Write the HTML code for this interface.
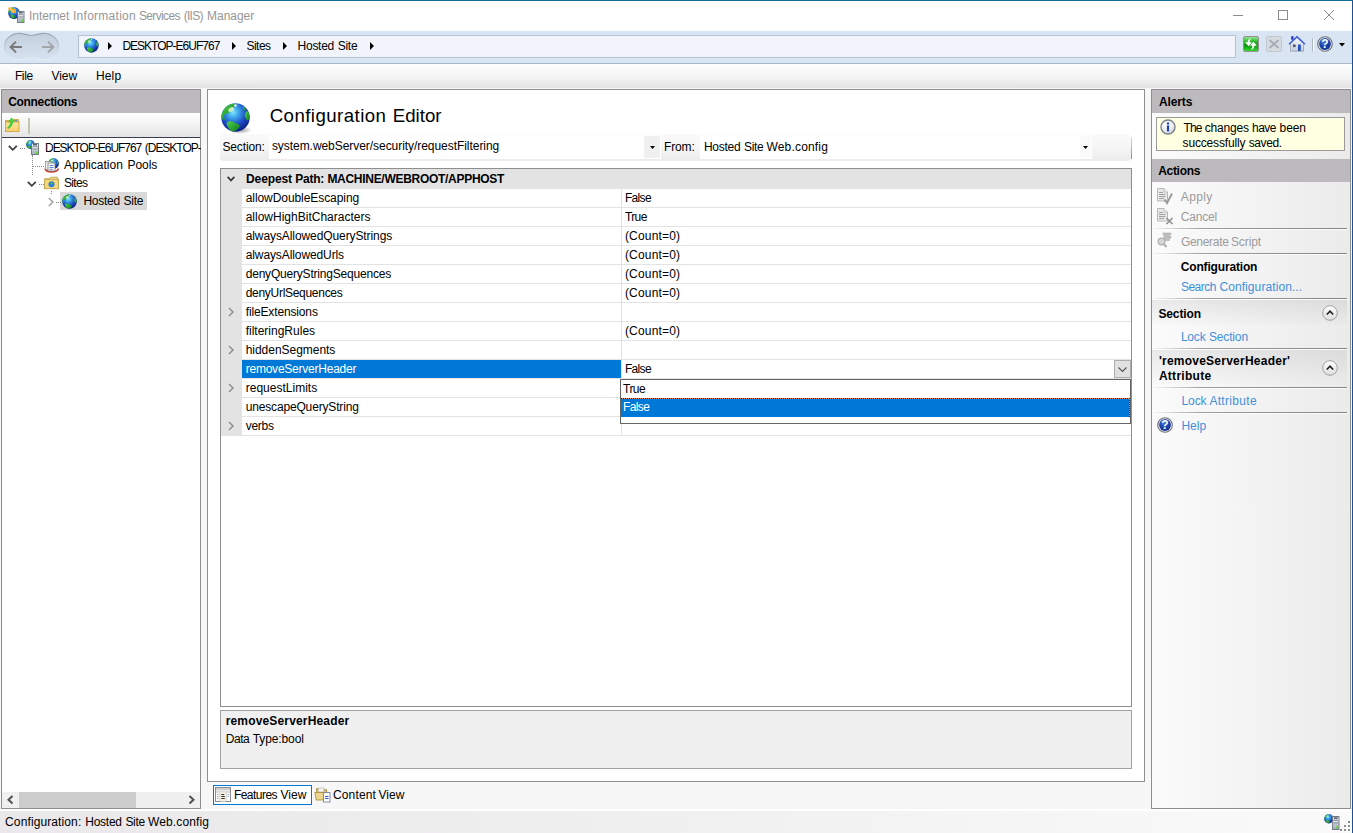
<!DOCTYPE html>
<html><head><meta charset="utf-8"><title>Internet Information Services (IIS) Manager</title>
<style>
*{box-sizing:border-box;margin:0;padding:0}
html,body{width:1353px;height:833px;overflow:hidden;background:#f0f0f0}
body{font-family:"Liberation Sans",sans-serif;font-size:12px;color:#000;position:relative}
.a{position:absolute;white-space:nowrap}
.t{position:absolute;white-space:nowrap;line-height:16px;height:16px}
.b{font-weight:bold}
.g{color:#9b9b9b}
.l{color:#4390da}
svg{position:absolute;overflow:visible}
.sep{position:absolute;left:1153px;width:194px;height:2px;background:linear-gradient(90deg,rgba(130,130,130,0.05),rgba(130,130,130,0.75) 25%,#848484) top/100% 1px no-repeat,linear-gradient(#fcfcfc,#fcfcfc) bottom/100% 1px no-repeat}
.hl{position:absolute;left:242px;width:889px;height:1px;background:#e3e3e3}
</style></head><body>
<!-- window frame -->
<div class="a" style="left:0;top:0;width:1353px;height:833px;border-top:1px solid #1a6b9c;border-right:1px solid #1d4f91;background:#fff"></div>
<!-- title bar -->
<div class="a" style="left:0;top:1px;width:1352px;height:30px;background:#fff"></div>
<svg style="left:8.0px;top:7.0px" width="12.0" height="12.0" viewBox="-1 -1 2 2">
<defs><radialGradient id="gt" cx="42%" cy="32%" r="68%"><stop offset="0" stop-color="#7fe6ff"/><stop offset="0.3" stop-color="#3aa0ea"/><stop offset="0.65" stop-color="#1e4cc4"/><stop offset="1" stop-color="#0a1e86"/></radialGradient>
<linearGradient id="lt" x1="0" y1="0" x2="1" y2="1"><stop offset="0" stop-color="#4fd24a"/><stop offset="1" stop-color="#0e7a22"/></linearGradient>
<clipPath id="ct"><circle r="0.97"/></clipPath></defs>
<circle r="0.98" fill="url(#gt)"/>
<g clip-path="url(#ct)" fill="url(#lt)"><path d="M-0.55 -0.85C-0.3 -0.97 -0.1 -0.97 0 -0.92L-0.12 -0.7C-0.2 -0.55 -0.35 -0.45 -0.45 -0.35C-0.55 -0.25 -0.7 -0.25 -0.8 -0.15C-0.85 -0.05 -0.75 0.1 -0.68 0.17L-0.9 0.12C-1 -0.1 -1 -0.4 -0.9 -0.6Z"/><path d="M-0.62 0.38C-0.45 0.2 -0.2 0.25 0 0.4C0.15 0.45 0.32 0.5 0.3 0.62C0.2 0.8 0 0.9 -0.12 1L-0.36 0.96C-0.4 0.8 -0.58 0.65 -0.62 0.38Z"/><path d="M0.7 -0.38C0.8 -0.48 0.9 -0.42 0.98 -0.2C1 0 0.96 0.15 0.85 0.22C0.74 0.15 0.64 0 0.64 -0.15Z"/><path d="M0.5 -0.8C0.64 -0.72 0.74 -0.56 0.68 -0.44L0.58 -0.52Z"/></g>
<ellipse cx="-0.3" cy="-0.55" rx="0.22" ry="0.14" fill="#f4ffd0" opacity="0.75" transform="rotate(-30 -0.3 -0.55)"/>
<ellipse cx="0" cy="-0.82" rx="0.1" ry="0.09" fill="#fff" opacity="0.8"/>
</svg><svg style="left:8px;top:7px" width="8" height="7" viewBox="0 0 8 7"><path d="M0.5 0.5H4.5V2L8 2V6H3.5V3.5L0.5 3.5Z" fill="#f5a81c"/><path d="M2 1.5L6 5" stroke="#fff3c8" stroke-width="0.9"/></svg><svg style="left:17px;top:11px" width="7.5" height="12" viewBox="0 0 8 12" preserveAspectRatio="none"><defs><linearGradient id="sv1" x1="0" y1="0" x2="0" y2="1"><stop offset="0" stop-color="#eef2f6"/><stop offset="0.45" stop-color="#c9d0d9"/><stop offset="1" stop-color="#a4adb9"/></linearGradient></defs><rect x="0.5" y="0.5" width="7" height="11" fill="url(#sv1)" stroke="#69727e" stroke-width="0.9"/><path d="M2 1.8H6" stroke="#1e2a38" stroke-width="1"/><path d="M1.5 3.800H6.500M1.500 5.800H6.500" stroke="#6a7380" stroke-width="0.8"/><path d="M1.500 4.800H6.500" stroke="#f4f6f8" stroke-width="0.9"/><rect x="4.600" y="8.600" width="2" height="2" fill="#4fe020"/></svg>
<svg style="left:1233px;top:10px" width="102" height="11" viewBox="0 0 102 11" fill="none" stroke="#8c8c8c" stroke-width="1"><path d="M0 5.5H10"/><rect x="45.5" y="0.5" width="9" height="9"/><path d="M91 0L101 10M101 0L91 10"/></svg>
<!-- nav bar -->
<div class="a" style="left:0;top:31px;width:1352px;height:33px;background:#d9e5f2;border-bottom:1px solid #a9b8c8"></div>
<div class="a" style="left:78px;top:35px;width:1158px;height:23px;background:#f1f5fb;border:1px solid #b4c3d6"></div>
<svg style="left:3px;top:32px" width="57" height="29" viewBox="0 0 57 29"><defs><linearGradient id="pg" x1="0" y1="0" x2="0" y2="1"><stop offset="0" stop-color="#c3cfdd"/><stop offset="1" stop-color="#d6e2ef"/></linearGradient><linearGradient id="ps" x1="0" y1="0" x2="0" y2="1"><stop offset="0" stop-color="#95a3b3"/><stop offset="0.5" stop-color="#c0ccda"/><stop offset="1" stop-color="#e6eef7"/></linearGradient></defs>
<path d="M14 1.5C20 0.5 23 3.5 28.5 3.5C34 3.5 37 0.5 43 1.5C50 2.5 55.5 8 55.5 14.5C55.5 21 50 26.5 43 27.5C37 28.5 34 25.5 28.5 25.5C23 25.5 20 28.5 14 27.5C7 26.5 1.5 21 1.5 14.5C1.5 8 7 2.5 14 1.5Z" fill="url(#pg)" stroke="url(#ps)" stroke-width="1.2"/>
<g fill="none" stroke-width="2"><path d="M8 15H19M13 9.6L7.6 15L13 20.4" stroke="#7a7a7a"/><path d="M39 15H50M45 9.6L50.4 15L45 20.4" stroke="#a3a6ab"/></g></svg><svg style="left:83.9px;top:38.0px" width="14.8" height="14.8" viewBox="-1 -1 2 2">
<defs><radialGradient id="ga" cx="42%" cy="32%" r="68%"><stop offset="0" stop-color="#7fe6ff"/><stop offset="0.3" stop-color="#3aa0ea"/><stop offset="0.65" stop-color="#1e4cc4"/><stop offset="1" stop-color="#0a1e86"/></radialGradient>
<linearGradient id="la" x1="0" y1="0" x2="1" y2="1"><stop offset="0" stop-color="#4fd24a"/><stop offset="1" stop-color="#0e7a22"/></linearGradient>
<clipPath id="ca"><circle r="0.97"/></clipPath></defs>
<circle r="0.98" fill="url(#ga)"/>
<g clip-path="url(#ca)" fill="url(#la)"><path d="M-0.55 -0.85C-0.3 -0.97 -0.1 -0.97 0 -0.92L-0.12 -0.7C-0.2 -0.55 -0.35 -0.45 -0.45 -0.35C-0.55 -0.25 -0.7 -0.25 -0.8 -0.15C-0.85 -0.05 -0.75 0.1 -0.68 0.17L-0.9 0.12C-1 -0.1 -1 -0.4 -0.9 -0.6Z"/><path d="M-0.62 0.38C-0.45 0.2 -0.2 0.25 0 0.4C0.15 0.45 0.32 0.5 0.3 0.62C0.2 0.8 0 0.9 -0.12 1L-0.36 0.96C-0.4 0.8 -0.58 0.65 -0.62 0.38Z"/><path d="M0.7 -0.38C0.8 -0.48 0.9 -0.42 0.98 -0.2C1 0 0.96 0.15 0.85 0.22C0.74 0.15 0.64 0 0.64 -0.15Z"/><path d="M0.5 -0.8C0.64 -0.72 0.74 -0.56 0.68 -0.44L0.58 -0.52Z"/></g>
<ellipse cx="-0.3" cy="-0.55" rx="0.22" ry="0.14" fill="#f4ffd0" opacity="0.75" transform="rotate(-30 -0.3 -0.55)"/>
<ellipse cx="0" cy="-0.82" rx="0.1" ry="0.09" fill="#fff" opacity="0.8"/>
</svg><svg style="left:108px;top:42px" width="4" height="8" viewBox="0 0 4 8"><path d="M0 0L4 4L0 8Z" fill="#000"/></svg><svg style="left:232px;top:42px" width="4" height="8" viewBox="0 0 4 8"><path d="M0 0L4 4L0 8Z" fill="#000"/></svg><svg style="left:283px;top:42px" width="4" height="8" viewBox="0 0 4 8"><path d="M0 0L4 4L0 8Z" fill="#000"/></svg><svg style="left:370px;top:42px" width="4" height="8" viewBox="0 0 4 8"><path d="M0 0L4 4L0 8Z" fill="#000"/></svg>
<svg style="left:1243px;top:36px" width="16" height="16" viewBox="0 0 16 16"><defs><linearGradient id="gr" x1="0" y1="0" x2="0" y2="1"><stop offset="0" stop-color="#9aec9a"/><stop offset="0.35" stop-color="#27b827"/><stop offset="0.6" stop-color="#0c960c"/><stop offset="1" stop-color="#35e235"/></linearGradient></defs><rect x="0.5" y="0.5" width="15" height="15" rx="1.5" fill="url(#gr)" stroke="#9a8f99"/><path d="M8.2 2.2C6 2.6 4.6 4.2 4.6 6.3H2L5.6 10.3L9 6.3H6.6C6.6 4.6 7.2 3.2 8.2 2.2Z" fill="#fff"/><path d="M7.8 13.8C10 13.4 11.4 11.8 11.4 9.7H14L10.4 5.7L7 9.7H9.400C9.400 11.400 8.800 12.800 7.800 13.800Z" fill="#fff"/></svg>
<svg style="left:1266px;top:36px" width="16" height="16" viewBox="0 0 16 16"><rect x="0.5" y="0.5" width="15" height="15" rx="1.5" fill="#d6dbe1" stroke="#bfc6cf"/><path d="M3.5 4L12.5 12M12.5 4L3.500 12" stroke="#a9adb3" stroke-width="1.8"/></svg>
<svg style="left:1288px;top:35px" width="18" height="17" viewBox="0 0 18 17"><defs><linearGradient id="hb" x1="0" y1="0" x2="0" y2="1"><stop offset="0" stop-color="#f6f8fb"/><stop offset="1" stop-color="#c4ccd8"/></linearGradient></defs><rect x="3.2" y="1.2" width="2.3" height="3.5" fill="#2238c8"/><path d="M2.500 8.500L9 2.500L15.500 8.500V16.200H2.500Z" fill="url(#hb)" stroke="#8f98a8" stroke-width="0.7"/><path d="M1 9.300L9 1.700L17 9.300" fill="none" stroke="#3355d6" stroke-width="1.3"/><rect x="10" y="9.500" width="2.800" height="6.500" fill="#2450b8"/><rect x="5" y="9.500" width="2.600" height="2.600" fill="#4a5468"/></svg>
<div class="a" style="left:1312px;top:38px;width:1px;height:14px;background:#aab4c2"></div><div class="a" style="left:1313px;top:38px;width:1px;height:14px;background:#fff"></div>
<svg style="left:1317px;top:36px" width="16" height="16" viewBox="-8 -8 16 16"><defs><radialGradient id="hq" cx="40%" cy="30%" r="75%"><stop offset="0" stop-color="#4f7fe0"/><stop offset="0.5" stop-color="#1c44b0"/><stop offset="1" stop-color="#10308c"/></radialGradient></defs><circle r="7.3" fill="#eceef0" stroke="#6e7074" stroke-width="1.1"/><circle r="5.900" fill="url(#hq)"/><text x="0" y="4.4" text-anchor="middle" font-family="Liberation Sans,sans-serif" font-weight="bold" font-size="12" fill="#fff">?</text></svg>
<svg style="left:1339px;top:43px" width="6" height="4" viewBox="0 0 6 4"><path d="M0 0H6L3 3.6Z" fill="#000"/></svg>
<!-- menu bar -->
<div class="a" style="left:0;top:64px;width:1352px;height:24px;background:linear-gradient(#fefefe,#f4f4f4 55%,#e4e2e4)"></div>
<!-- main bg -->
<div class="a" style="left:0;top:88px;width:1352px;height:722px;background:#f7f7f7"></div>
<!-- left panel -->
<div class="a" style="left:1px;top:89px;width:200px;height:720px;background:#fff;border:1px solid #8e8e8e"></div>
<div class="a" style="left:2px;top:90px;width:198px;height:23px;background:#bcbabd"></div>
<div class="a" style="left:2px;top:113px;width:198px;height:25px;background:linear-gradient(#fff,#f2f2f2 50%,#e4e4e4);border-bottom:1px solid #3c3c50"></div>
<div class="a" style="left:28px;top:118px;width:2px;height:16px;background:#c6c5b0"></div>
<div class="a" style="left:60px;top:192px;width:87px;height:18px;background:#d9d9d9"></div>
<svg style="left:5px;top:117px" width="15" height="15" viewBox="0 0 15 15"><defs><linearGradient id="fo" x1="0" y1="0" x2="0" y2="1"><stop offset="0" stop-color="#fde6a0"/><stop offset="1" stop-color="#f8cf6c"/></linearGradient></defs><path d="M0.5 3.500H8L9 2.500H13.500V5H0.500Z" fill="#f3c968" stroke="#c89b3c" stroke-width="0.8"/><rect x="0.5" y="5" width="13.500" height="9.500" fill="url(#fo)" stroke="#c89b3c" stroke-width="0.8"/><ellipse cx="11" cy="3.700" rx="1.300" ry="0.600" fill="#3a8af0"/><path d="M2.300 10.800C4.500 9.500 5.500 7 5.500 4.500L3.800 4.800L6.500 0.800L9.500 4L7.800 4.200C7.800 7.500 6 10.500 3.200 11.600Z" fill="#3fd83a" stroke="#2aa82a" stroke-width="0.4"/></svg><svg style="left:8px;top:145px" width="10" height="6" viewBox="0 0 10 6" fill="none" stroke="#404040" stroke-width="1.8"><path d="M0.8 0.8L4.8 4.8L8.8 0.8"/></svg><svg style="left:27px;top:181px" width="10" height="6" viewBox="0 0 10 6" fill="none" stroke="#404040" stroke-width="1.8"><path d="M0.8 0.8L4.8 4.8L8.8 0.8"/></svg><svg style="left:48px;top:197px" width="6" height="10" viewBox="0 0 6 10" fill="none" stroke="#a6a6a6" stroke-width="1.7"><path d="M0.8 1L4.8 5L0.8 9"/></svg><div class="a" style="left:20px;top:148px;width:5px;border-top:1px dotted #888"></div><div class="a" style="left:32px;top:155px;height:20px;border-left:1px dotted #888"></div><div class="a" style="left:33px;top:166px;width:11px;border-top:1px dotted #888"></div><div class="a" style="left:39px;top:184px;width:5px;border-top:1px dotted #888"></div><div class="a" style="left:51px;top:191px;height:3px;border-left:1px dotted #888"></div><div class="a" style="left:56px;top:202px;width:5px;border-top:1px dotted #888"></div><svg style="left:26.0px;top:139.5px" width="9.0" height="9.0" viewBox="-1 -1 2 2">
<defs><radialGradient id="gs" cx="42%" cy="32%" r="68%"><stop offset="0" stop-color="#7fe6ff"/><stop offset="0.3" stop-color="#3aa0ea"/><stop offset="0.65" stop-color="#1e4cc4"/><stop offset="1" stop-color="#0a1e86"/></radialGradient>
<linearGradient id="ls" x1="0" y1="0" x2="1" y2="1"><stop offset="0" stop-color="#4fd24a"/><stop offset="1" stop-color="#0e7a22"/></linearGradient>
<clipPath id="cs"><circle r="0.97"/></clipPath></defs>
<circle r="0.98" fill="url(#gs)"/>
<g clip-path="url(#cs)" fill="url(#ls)"><path d="M-0.55 -0.85C-0.3 -0.97 -0.1 -0.97 0 -0.92L-0.12 -0.7C-0.2 -0.55 -0.35 -0.45 -0.45 -0.35C-0.55 -0.25 -0.7 -0.25 -0.8 -0.15C-0.85 -0.05 -0.75 0.1 -0.68 0.17L-0.9 0.12C-1 -0.1 -1 -0.4 -0.9 -0.6Z"/><path d="M-0.62 0.38C-0.45 0.2 -0.2 0.25 0 0.4C0.15 0.45 0.32 0.5 0.3 0.62C0.2 0.8 0 0.9 -0.12 1L-0.36 0.96C-0.4 0.8 -0.58 0.65 -0.62 0.38Z"/><path d="M0.7 -0.38C0.8 -0.48 0.9 -0.42 0.98 -0.2C1 0 0.96 0.15 0.85 0.22C0.74 0.15 0.64 0 0.64 -0.15Z"/><path d="M0.5 -0.8C0.64 -0.72 0.74 -0.56 0.68 -0.44L0.58 -0.52Z"/></g>
<ellipse cx="-0.3" cy="-0.55" rx="0.22" ry="0.14" fill="#f4ffd0" opacity="0.75" transform="rotate(-30 -0.3 -0.55)"/>
<ellipse cx="0" cy="-0.82" rx="0.1" ry="0.09" fill="#fff" opacity="0.8"/>
</svg><svg style="left:31px;top:143px" width="8" height="12" viewBox="0 0 8 12" preserveAspectRatio="none"><defs><linearGradient id="sv2" x1="0" y1="0" x2="0" y2="1"><stop offset="0" stop-color="#eef2f6"/><stop offset="0.45" stop-color="#c9d0d9"/><stop offset="1" stop-color="#a4adb9"/></linearGradient></defs><rect x="0.5" y="0.5" width="7" height="11" fill="url(#sv2)" stroke="#69727e" stroke-width="0.9"/><path d="M2 1.8H6" stroke="#1e2a38" stroke-width="1"/><path d="M1.5 3.800H6.500M1.500 5.800H6.500" stroke="#6a7380" stroke-width="0.8"/><path d="M1.500 4.800H6.500" stroke="#f4f6f8" stroke-width="0.9"/><rect x="4.600" y="8.600" width="2" height="2" fill="#4fe020"/></svg><svg style="left:48.0px;top:157.5px" width="11.0" height="11.0" viewBox="-1 -1 2 2">
<defs><radialGradient id="gp" cx="42%" cy="32%" r="68%"><stop offset="0" stop-color="#7fe6ff"/><stop offset="0.3" stop-color="#3aa0ea"/><stop offset="0.65" stop-color="#1e4cc4"/><stop offset="1" stop-color="#0a1e86"/></radialGradient>
<linearGradient id="lp" x1="0" y1="0" x2="1" y2="1"><stop offset="0" stop-color="#4fd24a"/><stop offset="1" stop-color="#0e7a22"/></linearGradient>
<clipPath id="cp"><circle r="0.97"/></clipPath></defs>
<circle r="0.98" fill="url(#gp)"/>
<g clip-path="url(#cp)" fill="url(#lp)"><path d="M-0.55 -0.85C-0.3 -0.97 -0.1 -0.97 0 -0.92L-0.12 -0.7C-0.2 -0.55 -0.35 -0.45 -0.45 -0.35C-0.55 -0.25 -0.7 -0.25 -0.8 -0.15C-0.85 -0.05 -0.75 0.1 -0.68 0.17L-0.9 0.12C-1 -0.1 -1 -0.4 -0.9 -0.6Z"/><path d="M-0.62 0.38C-0.45 0.2 -0.2 0.25 0 0.4C0.15 0.45 0.32 0.5 0.3 0.62C0.2 0.8 0 0.9 -0.12 1L-0.36 0.96C-0.4 0.8 -0.58 0.65 -0.62 0.38Z"/><path d="M0.7 -0.38C0.8 -0.48 0.9 -0.42 0.98 -0.2C1 0 0.96 0.15 0.85 0.22C0.74 0.15 0.64 0 0.64 -0.15Z"/><path d="M0.5 -0.8C0.64 -0.72 0.74 -0.56 0.68 -0.44L0.58 -0.52Z"/></g>
<ellipse cx="-0.3" cy="-0.55" rx="0.22" ry="0.14" fill="#f4ffd0" opacity="0.75" transform="rotate(-30 -0.3 -0.55)"/>
<ellipse cx="0" cy="-0.82" rx="0.1" ry="0.09" fill="#fff" opacity="0.8"/>
</svg><svg style="left:44px;top:159px" width="16" height="15" viewBox="0 0 16 15"><path d="M1 9.5C2 14 13 14 14.5 9.5" fill="none" stroke="#d83a30" stroke-width="1.6"/><rect x="1.5" y="2.5" width="6.5" height="8" fill="#f2f2f2" stroke="#8a8a8a" stroke-width="0.8"/><rect x="4" y="4" width="7" height="8" fill="#fafafa" stroke="#7a7a7a" stroke-width="0.8"/><path d="M5.5 6.5H9.5M5.5 8.5H9.5M5.5 10.3H8.5" stroke="#3a62c8" stroke-width="0.8"/></svg><svg style="left:44px;top:176px" width="15" height="13.5" viewBox="0 0 15 13"><path d="M0.5 2.5H5L6.5 1H13.5V3" fill="#f3e2a0" stroke="#b89a3c" stroke-width="0.8"/><rect x="0.5" y="3" width="14" height="9.5" fill="#f2d77c" stroke="#b89a3c" stroke-width="0.8"/><circle cx="7.5" cy="8" r="3" fill="#2a7de0"/><path d="M6 6.5L8 6L9 7.5L7 8.5Z" fill="#4fc04a"/></svg><svg style="left:62.0px;top:193.5px" width="15.0" height="15.0" viewBox="-1 -1 2 2">
<defs><radialGradient id="gh" cx="42%" cy="32%" r="68%"><stop offset="0" stop-color="#7fe6ff"/><stop offset="0.3" stop-color="#3aa0ea"/><stop offset="0.65" stop-color="#1e4cc4"/><stop offset="1" stop-color="#0a1e86"/></radialGradient>
<linearGradient id="lh" x1="0" y1="0" x2="1" y2="1"><stop offset="0" stop-color="#4fd24a"/><stop offset="1" stop-color="#0e7a22"/></linearGradient>
<clipPath id="ch"><circle r="0.97"/></clipPath></defs>
<circle r="0.98" fill="url(#gh)"/>
<g clip-path="url(#ch)" fill="url(#lh)"><path d="M-0.55 -0.85C-0.3 -0.97 -0.1 -0.97 0 -0.92L-0.12 -0.7C-0.2 -0.55 -0.35 -0.45 -0.45 -0.35C-0.55 -0.25 -0.7 -0.25 -0.8 -0.15C-0.85 -0.05 -0.75 0.1 -0.68 0.17L-0.9 0.12C-1 -0.1 -1 -0.4 -0.9 -0.6Z"/><path d="M-0.62 0.38C-0.45 0.2 -0.2 0.25 0 0.4C0.15 0.45 0.32 0.5 0.3 0.62C0.2 0.8 0 0.9 -0.12 1L-0.36 0.96C-0.4 0.8 -0.58 0.65 -0.62 0.38Z"/><path d="M0.7 -0.38C0.8 -0.48 0.9 -0.42 0.98 -0.2C1 0 0.96 0.15 0.85 0.22C0.74 0.15 0.64 0 0.64 -0.15Z"/><path d="M0.5 -0.8C0.64 -0.72 0.74 -0.56 0.68 -0.44L0.58 -0.52Z"/></g>
<ellipse cx="-0.3" cy="-0.55" rx="0.22" ry="0.14" fill="#f4ffd0" opacity="0.75" transform="rotate(-30 -0.3 -0.55)"/>
<ellipse cx="0" cy="-0.82" rx="0.1" ry="0.09" fill="#fff" opacity="0.8"/>
</svg>
<div class="a" style="left:0;top:139px;width:201px;height:18px;overflow:hidden"><div class="t" style="left:45px;top:1px"><span style="position:absolute;left:0;letter-spacing:-1.04px">DESKTOP-E6UF767</span> <span style="position:absolute;left:99.8px;letter-spacing:-1.03px">(DESKTOP-</span></div></div>
<!-- scrollbar -->
<div class="a" style="left:2px;top:792px;width:198px;height:16px;background:#f0f0f0"></div>
<div class="a" style="left:19px;top:792px;width:117px;height:16px;background:#cdcdcd"></div>
<svg style="left:6px;top:795px" width="190" height="10" viewBox="0 0 190 10" fill="none" stroke="#505050" stroke-width="2"><path d="M6.5 1L2.5 4.7L6.5 8.4"/><path d="M183.500 1L187.500 4.700L183.500 8.400"/></svg>
<!-- center panel -->
<div class="a" style="left:207px;top:89px;width:938px;height:693px;background:#fff;border:1px solid #8e8e8e"></div>
<div class="a" style="left:228px;top:126px;width:24px;height:8px;border-radius:50%;background:radial-gradient(closest-side,#999,rgba(255,255,255,0))"></div><svg style="left:221.2px;top:103.0px" width="29.0" height="29.0" viewBox="-1 -1 2 2">
<defs><radialGradient id="gc" cx="42%" cy="32%" r="68%"><stop offset="0" stop-color="#7fe6ff"/><stop offset="0.3" stop-color="#3aa0ea"/><stop offset="0.65" stop-color="#1e4cc4"/><stop offset="1" stop-color="#0a1e86"/></radialGradient>
<linearGradient id="lc" x1="0" y1="0" x2="1" y2="1"><stop offset="0" stop-color="#4fd24a"/><stop offset="1" stop-color="#0e7a22"/></linearGradient>
<clipPath id="cc"><circle r="0.97"/></clipPath></defs>
<circle r="0.98" fill="url(#gc)"/>
<g clip-path="url(#cc)" fill="url(#lc)"><path d="M-0.55 -0.85C-0.3 -0.97 -0.1 -0.97 0 -0.92L-0.12 -0.7C-0.2 -0.55 -0.35 -0.45 -0.45 -0.35C-0.55 -0.25 -0.7 -0.25 -0.8 -0.15C-0.85 -0.05 -0.75 0.1 -0.68 0.17L-0.9 0.12C-1 -0.1 -1 -0.4 -0.9 -0.6Z"/><path d="M-0.62 0.38C-0.45 0.2 -0.2 0.25 0 0.4C0.15 0.45 0.32 0.5 0.3 0.62C0.2 0.8 0 0.9 -0.12 1L-0.36 0.96C-0.4 0.8 -0.58 0.65 -0.62 0.38Z"/><path d="M0.7 -0.38C0.8 -0.48 0.9 -0.42 0.98 -0.2C1 0 0.96 0.15 0.85 0.22C0.74 0.15 0.64 0 0.64 -0.15Z"/><path d="M0.5 -0.8C0.64 -0.72 0.74 -0.56 0.68 -0.44L0.58 -0.52Z"/></g>
<ellipse cx="-0.3" cy="-0.55" rx="0.22" ry="0.14" fill="#f4ffd0" opacity="0.75" transform="rotate(-30 -0.3 -0.55)"/>
<ellipse cx="0" cy="-0.82" rx="0.1" ry="0.09" fill="#fff" opacity="0.8"/>
</svg>
<!-- section toolbar -->
<div class="a" style="left:220px;top:134px;width:911px;height:27px;border-radius:4px;background:linear-gradient(#fafafa,#f6f6f6 50%,#ebebeb)"></div>
<div class="a" style="left:1131px;top:137px;width:1px;height:22px;background:linear-gradient(#dcdcdc,#8e8e8e)"></div>
<div class="a" style="left:269px;top:135px;width:392px;height:24px;background:#fff"></div>
<div class="a" style="left:644px;top:136px;width:16px;height:22px;background:#f0f0f0"></div>
<div class="a" style="left:700px;top:135px;width:392px;height:24px;background:#fff"></div>
<div class="a" style="left:1080px;top:136px;width:11px;height:22px;background:#fafafa"></div>
<svg style="left:650px;top:146px" width="5" height="3" viewBox="0 0 5 3"><path d="M0 0H5L2.5 3Z" fill="#000"/></svg>
<svg style="left:1083px;top:146px" width="5" height="3" viewBox="0 0 5 3"><path d="M0 0H5L2.5 3Z" fill="#000"/></svg>
<!-- grid -->
<div class="a" style="left:220px;top:168px;width:912px;height:539px;background:#fff;border:1px solid #8e8e8e"></div>
<div class="a" style="left:221px;top:169px;width:910px;height:20px;background:#e3e3e3"></div>
<div class="a" style="left:221px;top:189px;width:21px;height:247px;background:#e3e3e3"></div>
<div class="a" style="left:621px;top:189px;width:1px;height:247px;background:#e3e3e3"></div>
<div class="hl" style="top:207px"></div><div class="hl" style="top:226px"></div><div class="hl" style="top:245px"></div><div class="hl" style="top:264px"></div><div class="hl" style="top:283px"></div><div class="hl" style="top:302px"></div><div class="hl" style="top:321px"></div><div class="hl" style="top:340px"></div><div class="hl" style="top:359px"></div><div class="hl" style="top:378px"></div><div class="hl" style="top:397px"></div><div class="hl" style="top:416px"></div><div class="hl" style="top:435px"></div>
<div class="a" style="left:242px;top:360px;width:379px;height:18px;background:#0078d7"></div>
<!-- expanders -->
<svg style="left:227px;top:176px" width="8" height="6" viewBox="0 0 8 6" fill="none" stroke="#3a3a3a" stroke-width="1.7"><path d="M0.6 0.8L4 4.4L7.4 0.8"/></svg>
<svg style="left:228px;top:307px" width="6" height="10" viewBox="0 0 6 10" fill="none" stroke="#8a8a8a" stroke-width="1.4"><path d="M1 1L5 5L1 9"/></svg><svg style="left:228px;top:345px" width="6" height="10" viewBox="0 0 6 10" fill="none" stroke="#8a8a8a" stroke-width="1.4"><path d="M1 1L5 5L1 9"/></svg><svg style="left:228px;top:383px" width="6" height="10" viewBox="0 0 6 10" fill="none" stroke="#8a8a8a" stroke-width="1.4"><path d="M1 1L5 5L1 9"/></svg><svg style="left:228px;top:421px" width="6" height="10" viewBox="0 0 6 10" fill="none" stroke="#8a8a8a" stroke-width="1.4"><path d="M1 1L5 5L1 9"/></svg>
<!-- dropdown button -->
<div class="a" style="left:1114px;top:360px;width:17px;height:18px;background:#e1e1e1;border:1px solid #adadad"></div>
<svg style="left:1118px;top:367px" width="9" height="6" viewBox="0 0 9 6" fill="none" stroke="#555" stroke-width="1.1"><path d="M0.5 0.5L4.5 4.5L8.5 0.5"/></svg>
<!-- dropdown list -->
<div class="a" style="left:620px;top:379px;width:511px;height:45px;background:#fff;border:1px solid #646464"></div>
<div class="a" style="left:621px;top:398px;width:509px;height:19px;background:#0078d7"></div><div class="a" style="left:621px;top:398px;width:509px;height:1px;background:repeating-linear-gradient(90deg,#1a1a1a 0 1px,#f0902a 1px 2px)"></div><div class="a" style="left:1129px;top:398px;width:1px;height:19px;background:repeating-linear-gradient(#1a1a1a 0 1px,#f0902a 1px 2px)"></div>
<!-- description -->
<div class="a" style="left:220px;top:710px;width:912px;height:59px;background:#f0f0f0;border:1px solid #a0a0a0"></div>
<!-- tabs -->
<div class="a" style="left:213px;top:785px;width:99px;height:20px;background:#fff;border:1px solid #0078d7"></div>
<svg style="left:215px;top:787px" width="16" height="15" viewBox="0 0 16 15"><rect x="0.5" y="0.5" width="15" height="14" fill="#fff" stroke="#8c8c8c" stroke-width="1"/><rect x="1" y="1" width="14" height="2" fill="#cfcfcf"/><rect x="1" y="3" width="14" height="2" fill="#e6e6e6"/><path d="M1 5.2H15" stroke="#b5b5b5" stroke-width="0.6"/><rect x="5" y="5.5" width="6" height="9" fill="#f5f1df"/><path d="M4.7 5.5V14.5M11.3 5.5V14.5" stroke="#b8b8b8" stroke-width="0.6"/><path d="M6.3 7.5H9.2M6.3 9.5H9.8M6.3 11.5H9.8" stroke="#333" stroke-width="1"/><path d="M2 7.5H3.4M2 9.5H3.4M2 11.5H3.4" stroke="#888" stroke-width="0.8"/><path d="M12.6 7.5H13.8M12.6 9.5H13.8" stroke="#5a8ae0" stroke-width="0.9"/></svg>
<svg style="left:314px;top:786px" width="18" height="17" viewBox="0 0 18 17"><path d="M2.5 2.5H7L8 3.5H12.5V13H2.5Z" fill="#d9bd6c" stroke="#a68a3a" stroke-width="0.8"/><path d="M4.5 2H10V6H4.5Z" fill="#f4f4f4" stroke="#b0b0b0" stroke-width="0.6"/><path d="M0.8 6.5H11.5L13 14H2.2Z" fill="#ecd58e" stroke="#a68a3a" stroke-width="0.8"/><rect x="9.5" y="6.5" width="6.5" height="9.5" fill="#fff" stroke="#7a8294" stroke-width="0.9"/><path d="M11 10.5H14.5M11 12.5H14.5" stroke="#2f62d0" stroke-width="1"/></svg>
<!-- right panel -->
<div class="a" style="left:1151px;top:89px;width:200px;height:720px;background:linear-gradient(90deg,#fbfbfb,#f3f3f3 50%,#ebebeb);border:1px solid #8e8e8e"></div>
<div class="a" style="left:1152px;top:90px;width:198px;height:23px;background:#bcbabd"></div>
<div class="a" style="left:1156px;top:117px;width:189px;height:34px;background:#ffffe1;border:1px solid #9a9a9a"></div>
<div class="a" style="left:1152px;top:159px;width:198px;height:23px;background:#bcbabd"></div>
<div class="sep" style="top:228px"></div>
<div class="sep" style="top:253px"></div>
<div class="sep" style="top:298px"></div>
<div class="a" style="left:1152px;top:300px;width:195px;height:25px;background:linear-gradient(rgba(110,110,110,0.13),rgba(160,160,160,0.02))"></div>
<div class="sep" style="top:348px"></div>
<div class="a" style="left:1152px;top:350px;width:195px;height:34px;background:linear-gradient(rgba(110,110,110,0.13),rgba(160,160,160,0.02))"></div>
<div class="sep" style="top:387px"></div>
<div class="sep" style="top:412px"></div>
<svg style="left:1160px;top:119px" width="16" height="16" viewBox="-8 -8 16 16"><defs><radialGradient id="inf" cx="40%" cy="30%" r="75%"><stop offset="0" stop-color="#fff"/><stop offset="0.6" stop-color="#eceef2"/><stop offset="1" stop-color="#c4c8d0"/></radialGradient></defs><circle r="7" fill="url(#inf)" stroke="#7d828c" stroke-width="1.4"/><circle cx="0" cy="-3.6" r="1.2" fill="#1c44b8"/><rect x="-1.1" y="-1.6" width="2.2" height="6" fill="#1c44b8"/></svg><svg style="left:1157px;top:188px" width="17" height="17" viewBox="0 0 17 17"><path d="M0.5 0.5H7L10.5 4V13H0.5Z" fill="#e8e8e8" stroke="#b2b2b2" stroke-width="0.9"/><path d="M7 0.5V4H10.5" fill="#f6f6f6" stroke="#b2b2b2" stroke-width="0.8"/><path d="M2 4.5H6M2 6.500H8.500M2 8.500H8.500M2 10.500H7" stroke="#a2a2a2" stroke-width="1"/><path d="M7.500 11.500L10 15L15 5.500" fill="none" stroke="#9c9c9c" stroke-width="2"/></svg><svg style="left:1157px;top:208px" width="17" height="17" viewBox="0 0 17 17"><path d="M0.5 0.5H7L10.5 4V13H0.5Z" fill="#e8e8e8" stroke="#b2b2b2" stroke-width="0.9"/><path d="M7 0.5V4H10.5" fill="#f6f6f6" stroke="#b2b2b2" stroke-width="0.8"/><path d="M2 4.5H6M2 6.500H8.500M2 8.500H8.500M2 10.500H7" stroke="#a2a2a2" stroke-width="1"/><path d="M9.5 10L15.5 16M15.5 10L9.5 16" fill="none" stroke="#8f8f8f" stroke-width="1.6"/></svg><svg style="left:1157px;top:232px" width="16" height="16" viewBox="0 0 16 16"><path d="M6.500 1H13.500C14.500 1 14.500 2.800 13.500 2.800H12.500L12.500 4.500H14V6H12.500V8.500H6.500C5.500 8.500 5.500 7 6.500 7H7V2.800H6.500C5.500 2.800 5.500 1 6.500 1Z" fill="#bdbdbd" stroke="#adadad" stroke-width="0.6"/><circle cx="4.500" cy="9.500" r="3.400" fill="#d6d6d6" stroke="#b0b0b0" stroke-width="1.200"/><path d="M6.800 12L9.500 15" stroke="#b0b0b0" stroke-width="2"/></svg><svg style="left:1322px;top:305px" width="16" height="16" viewBox="-8 -8 16 16"><defs><linearGradient id="cc1330313" x1="0" y1="0" x2="0" y2="1"><stop offset="0" stop-color="#fff"/><stop offset="1" stop-color="#dcdcdc"/></linearGradient></defs><circle r="7.3" fill="url(#cc1330313)" stroke="#9a9a9a" stroke-width="0.9"/><path d="M-3.2 1.5L0 -1.8L3.2 1.5" fill="none" stroke="#222" stroke-width="1.7"/></svg><svg style="left:1322px;top:360px" width="16" height="16" viewBox="-8 -8 16 16"><defs><linearGradient id="cc1330368" x1="0" y1="0" x2="0" y2="1"><stop offset="0" stop-color="#fff"/><stop offset="1" stop-color="#dcdcdc"/></linearGradient></defs><circle r="7.3" fill="url(#cc1330368)" stroke="#9a9a9a" stroke-width="0.9"/><path d="M-3.2 1.5L0 -1.8L3.2 1.5" fill="none" stroke="#222" stroke-width="1.7"/></svg><svg style="left:1157px;top:417px" width="16" height="16" viewBox="-8 -8 16 16"><defs><radialGradient id="hq2" cx="40%" cy="30%" r="75%"><stop offset="0" stop-color="#4f7fe0"/><stop offset="0.5" stop-color="#1c44b0"/><stop offset="1" stop-color="#10308c"/></radialGradient></defs><circle r="7.3" fill="#eceef0" stroke="#6e7074" stroke-width="1.1"/><circle r="5.900" fill="url(#hq2)"/><text x="0" y="4.4" text-anchor="middle" font-family="Liberation Sans,sans-serif" font-weight="bold" font-size="12" fill="#fff">?</text></svg>
<!-- status bar -->
<div class="a" style="left:0;top:809px;width:1352px;height:2px;background:#fff"></div>
<div class="a" style="left:0;top:811px;width:1352px;height:22px;background:linear-gradient(90deg,#eae8ea,#efeeef 40%,#fafafa)"></div>
<svg style="left:1324.2px;top:814.2px" width="9.6" height="9.6" viewBox="-1 -1 2 2">
<defs><radialGradient id="gz" cx="42%" cy="32%" r="68%"><stop offset="0" stop-color="#7fe6ff"/><stop offset="0.3" stop-color="#3aa0ea"/><stop offset="0.65" stop-color="#1e4cc4"/><stop offset="1" stop-color="#0a1e86"/></radialGradient>
<linearGradient id="lz" x1="0" y1="0" x2="1" y2="1"><stop offset="0" stop-color="#4fd24a"/><stop offset="1" stop-color="#0e7a22"/></linearGradient>
<clipPath id="cz"><circle r="0.97"/></clipPath></defs>
<circle r="0.98" fill="url(#gz)"/>
<g clip-path="url(#cz)" fill="url(#lz)"><path d="M-0.55 -0.85C-0.3 -0.97 -0.1 -0.97 0 -0.92L-0.12 -0.7C-0.2 -0.55 -0.35 -0.45 -0.45 -0.35C-0.55 -0.25 -0.7 -0.25 -0.8 -0.15C-0.85 -0.05 -0.75 0.1 -0.68 0.17L-0.9 0.12C-1 -0.1 -1 -0.4 -0.9 -0.6Z"/><path d="M-0.62 0.38C-0.45 0.2 -0.2 0.25 0 0.4C0.15 0.45 0.32 0.5 0.3 0.62C0.2 0.8 0 0.9 -0.12 1L-0.36 0.96C-0.4 0.8 -0.58 0.65 -0.62 0.38Z"/><path d="M0.7 -0.38C0.8 -0.48 0.9 -0.42 0.98 -0.2C1 0 0.96 0.15 0.85 0.22C0.74 0.15 0.64 0 0.64 -0.15Z"/><path d="M0.5 -0.8C0.64 -0.72 0.74 -0.56 0.68 -0.44L0.58 -0.52Z"/></g>
<ellipse cx="-0.3" cy="-0.55" rx="0.22" ry="0.14" fill="#f4ffd0" opacity="0.75" transform="rotate(-30 -0.3 -0.55)"/>
<ellipse cx="0" cy="-0.82" rx="0.1" ry="0.09" fill="#fff" opacity="0.8"/>
</svg><svg style="left:1332px;top:816px" width="7.5" height="14" viewBox="0 0 8 12" preserveAspectRatio="none"><defs><linearGradient id="sv3" x1="0" y1="0" x2="0" y2="1"><stop offset="0" stop-color="#eef2f6"/><stop offset="0.45" stop-color="#c9d0d9"/><stop offset="1" stop-color="#a4adb9"/></linearGradient></defs><rect x="0.5" y="0.5" width="7" height="11" fill="url(#sv3)" stroke="#69727e" stroke-width="0.9"/><path d="M2 1.8H6" stroke="#1e2a38" stroke-width="1"/><path d="M1.5 3.800H6.500M1.500 5.800H6.500" stroke="#6a7380" stroke-width="0.8"/><path d="M1.500 4.800H6.500" stroke="#f4f6f8" stroke-width="0.9"/><rect x="4.600" y="8.600" width="2" height="2" fill="#4fe020"/></svg><svg style="left:1340px;top:821px" width="10" height="10" viewBox="0 0 10 10" fill="#8c8c8c"><rect x="8" y="0" width="2" height="2"/><rect x="4" y="4" width="2" height="2"/><rect x="8" y="4" width="2" height="2"/><rect x="0" y="8" width="2" height="2"/><rect x="4" y="8" width="2" height="2"/><rect x="8" y="8" width="2" height="2"/></svg>
<div class="t" style="left:29.1px;top:8px;color:#969696"><span style="position:absolute;left:0.0px;letter-spacing:-0.07px">Internet</span> <span style="position:absolute;left:43.9px;letter-spacing:0.27px">Information</span> <span style="position:absolute;left:109.9px;letter-spacing:-0.65px">Services</span> <span style="position:absolute;left:154.6px;letter-spacing:-0.74px">(IIS)</span> <span style="position:absolute;left:178.0px;letter-spacing:-0.05px">Manager</span></div>
<div class="t" style="left:122.4px;top:38px;letter-spacing:-0.99px">DESKTOP-E6UF767</div>
<div class="t" style="left:246.4px;top:38px;letter-spacing:-0.50px">Sites</div>
<div class="t" style="left:297.6px;top:38px"><span style="position:absolute;left:0.0px;letter-spacing:-0.27px">Hosted</span> <span style="position:absolute;left:40.1px;letter-spacing:-0.26px">Site</span></div>
<div class="t" style="left:14.9px;top:68px;letter-spacing:-0.38px">File</div>
<div class="t" style="left:51.4px;top:68px;letter-spacing:-0.03px">View</div>
<div class="t" style="left:95.9px;top:68px;letter-spacing:0.17px">Help</div>
<div class="t b" style="left:8.3px;top:94px;letter-spacing:-0.35px">Connections</div>
<div class="t" style="left:64.1px;top:157px"><span style="position:absolute;left:0.0px;letter-spacing:-0.00px">Application</span> <span style="position:absolute;left:63.3px;letter-spacing:-0.01px">Pools</span></div>
<div class="t" style="left:63.9px;top:175px;letter-spacing:-0.67px">Sites</div>
<div class="t" style="left:83.4px;top:193px"><span style="position:absolute;left:0.0px;letter-spacing:-0.27px">Hosted</span> <span style="position:absolute;left:40.1px;letter-spacing:-0.26px">Site</span></div>
<div class="t" style="left:269.7px;top:103px;font-size:18.67px;line-height:25px;height:25px"><span style="position:absolute;left:0.0px;letter-spacing:0.44px">Configuration</span> <span style="position:absolute;left:123.0px;letter-spacing:0.03px">Editor</span></div>
<div class="t" style="left:222.4px;top:139px;letter-spacing:-0.12px">Section:</div>
<div class="t" style="left:271.9px;top:138px;letter-spacing:-0.05px">system.webServer/security/requestFiltering</div>
<div class="t" style="left:663.9px;top:139px;letter-spacing:-0.09px">From:</div>
<div class="t" style="left:703.9px;top:139px"><span style="position:absolute;left:0.0px;letter-spacing:-0.27px">Hosted</span> <span style="position:absolute;left:40.1px;letter-spacing:-0.33px">Site</span> <span style="position:absolute;left:62.6px;letter-spacing:0.17px">Web.config</span></div>
<div class="t b" style="left:246.0px;top:171px"><span style="position:absolute;left:0.0px;letter-spacing:-0.10px">Deepest</span> <span style="position:absolute;left:49.3px;letter-spacing:-0.27px">Path:</span> <span style="position:absolute;left:81.4px;letter-spacing:-0.29px">MACHINE/WEBROOT/APPHOST</span></div>
<div class="t" style="left:245.7px;top:190px;letter-spacing:-0.07px">allowDoubleEscaping</div>
<div class="t" style="left:624.9px;top:190px;letter-spacing:-0.65px">False</div>
<div class="t" style="left:245.7px;top:209px;letter-spacing:0.00px">allowHighBitCharacters</div>
<div class="t" style="left:624.9px;top:209px;letter-spacing:-0.58px">True</div>
<div class="t" style="left:245.7px;top:228px;letter-spacing:-0.09px">alwaysAllowedQueryStrings</div>
<div class="t" style="left:624.9px;top:228px;letter-spacing:0.19px">(Count=0)</div>
<div class="t" style="left:245.7px;top:247px;letter-spacing:-0.10px">alwaysAllowedUrls</div>
<div class="t" style="left:624.9px;top:247px;letter-spacing:0.19px">(Count=0)</div>
<div class="t" style="left:245.7px;top:266px;letter-spacing:-0.20px">denyQueryStringSequences</div>
<div class="t" style="left:624.9px;top:266px;letter-spacing:0.19px">(Count=0)</div>
<div class="t" style="left:245.7px;top:285px;letter-spacing:-0.29px">denyUrlSequences</div>
<div class="t" style="left:624.9px;top:285px;letter-spacing:0.19px">(Count=0)</div>
<div class="t" style="left:245.7px;top:304px;letter-spacing:-0.14px">fileExtensions</div>
<div class="t" style="left:245.7px;top:323px;letter-spacing:-0.00px">filteringRules</div>
<div class="t" style="left:624.9px;top:323px;letter-spacing:0.19px">(Count=0)</div>
<div class="t" style="left:245.7px;top:342px;letter-spacing:-0.03px">hiddenSegments</div>
<div class="t" style="left:245.7px;top:361px;letter-spacing:-0.23px;color:#fff">removeServerHeader</div>
<div class="t" style="left:624.9px;top:361px;letter-spacing:-0.65px">False</div>
<div class="t" style="left:245.7px;top:380px;letter-spacing:0.01px">requestLimits</div>
<div class="t" style="left:245.7px;top:399px;letter-spacing:-0.16px">unescapeQueryString</div>
<div class="t" style="left:245.7px;top:418px;letter-spacing:-0.27px">verbs</div>
<div class="t" style="left:623.1px;top:381px;letter-spacing:-0.59px">True</div>
<div class="t" style="left:623.1px;top:399px;letter-spacing:-0.65px;color:#fff">False</div>
<div class="t b" style="left:225.7px;top:713px;letter-spacing:0.16px">removeServerHeader</div>
<div class="t" style="left:225.7px;top:731px"><span style="position:absolute;left:0.0px;letter-spacing:-0.45px">Data</span> <span style="position:absolute;left:27.0px;letter-spacing:-0.10px">Type:bool</span></div>
<div class="t" style="left:233.9px;top:787px"><span style="position:absolute;left:0.0px;letter-spacing:-0.52px">Features</span> <span style="position:absolute;left:46.5px;letter-spacing:0.07px">View</span></div>
<div class="t" style="left:332.9px;top:787px"><span style="position:absolute;left:0.0px;letter-spacing:0.16px">Content</span> <span style="position:absolute;left:45.7px;letter-spacing:0.00px">View</span></div>
<div class="t" style="left:5.1px;top:814px"><span style="position:absolute;left:0.0px;letter-spacing:0.11px">Configuration:</span> <span style="position:absolute;left:80.2px;letter-spacing:-0.27px">Hosted</span> <span style="position:absolute;left:120.3px;letter-spacing:-0.33px">Site</span> <span style="position:absolute;left:142.8px;letter-spacing:0.14px">Web.config</span></div>
<div class="t b" style="left:1158.9px;top:94px;letter-spacing:-0.10px">Alerts</div>
<div class="t" style="left:1183.6px;top:120px"><span style="position:absolute;left:0.0px;letter-spacing:-0.94px">The</span> <span style="position:absolute;left:21.2px;letter-spacing:-0.20px">changes</span> <span style="position:absolute;left:68.5px;letter-spacing:-0.54px">have</span> <span style="position:absolute;left:96.0px;letter-spacing:-0.10px">been</span></div>
<div class="t" style="left:1182.6px;top:135px"><span style="position:absolute;left:0.0px;letter-spacing:-0.17px">successfully</span> <span style="position:absolute;left:66.2px;letter-spacing:-0.43px">saved.</span></div>
<div class="t b" style="left:1158.2px;top:163px;letter-spacing:-0.30px">Actions</div>
<div class="t g" style="left:1180.8px;top:189px;letter-spacing:0.37px">Apply</div>
<div class="t g" style="left:1180.8px;top:209px;letter-spacing:-0.19px">Cancel</div>
<div class="t g" style="left:1180.9px;top:234px"><span style="position:absolute;left:0.0px;letter-spacing:-0.29px">Generate</span> <span style="position:absolute;left:50.0px;letter-spacing:-0.08px">Script</span></div>
<div class="t b" style="left:1180.8px;top:259px;letter-spacing:-0.17px">Configuration</div>
<div class="t l" style="left:1180.9px;top:279px"><span style="position:absolute;left:0.0px;letter-spacing:-0.51px">Search</span> <span style="position:absolute;left:38.5px;letter-spacing:0.09px">Configuration...</span></div>
<div class="t b" style="left:1158.4px;top:306px;letter-spacing:-0.11px">Section</div>
<div class="t l" style="left:1180.9px;top:329px"><span style="position:absolute;left:0.0px;letter-spacing:-0.19px">Lock</span> <span style="position:absolute;left:28.1px;letter-spacing:-0.16px">Section</span></div>
<div class="t b" style="left:1158.9px;top:353px;letter-spacing:0.24px">'removeServerHeader'</div>
<div class="t b" style="left:1158.9px;top:368px;letter-spacing:0.28px">Attribute</div>
<div class="t l" style="left:1181.4px;top:393px"><span style="position:absolute;left:0.0px;letter-spacing:-0.04px">Lock</span> <span style="position:absolute;left:28.0px;letter-spacing:0.32px">Attribute</span></div>
<div class="t l" style="left:1181.4px;top:418px;letter-spacing:0.02px">Help</div>
</body></html>
